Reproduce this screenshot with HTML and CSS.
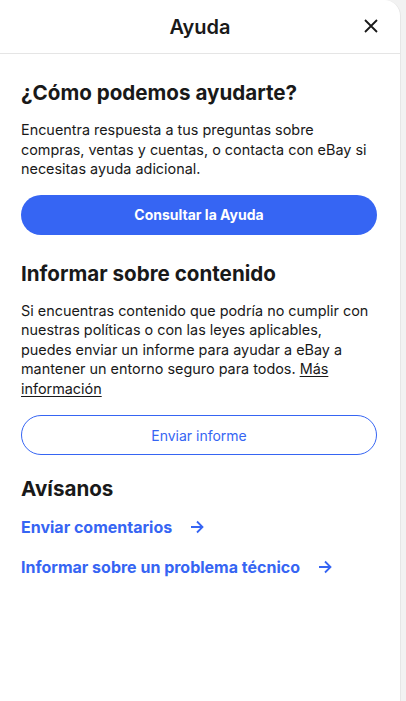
FILE: index.html
```html
<html>
	<head>
		<meta charset="utf-8">
		<link rel="stylesheet" href="styles.css">
	</head>
	<body>
		<div class="panel">
			<div class="head">
				<h1>Ayuda</h1>
				<button class="close" aria-label="Cerrar">
					<svg width="14" height="14" viewBox="0 0 14 14"><path d="M1 1L13 13M13 1L1 13" stroke="#191919" stroke-width="1.8" fill="none"/></svg>
				</button>
			</div>
			<div class="body">
				<h2>¿Cómo podemos ayudarte?</h2>
				<p>Encuentra respuesta a tus preguntas sobre compras, ventas y cuentas, o contacta con eBay si necesitas ayuda adicional.</p>
				<a class="btn primary">Consultar la Ayuda</a>

				<h2>Informar sobre contenido</h2>
				<p class="report">Si encuentras contenido que podría no cumplir con nuestras políticas o con las leyes aplicables, puedes enviar un informe para ayudar a eBay a mantener un entorno seguro para todos. <a class="more">Más información</a></p>
				<a class="btn secondary">Enviar informe</a>

				<h2>Avísanos</h2>
				<a class="link">Enviar comentarios <svg width="14" height="14" viewBox="0 0 14 14"><path d="M1 7H12.5M7 1.5L12.5 7L7 12.5" stroke="#3665f3" stroke-width="1.8" fill="none"/></svg></a>
				<a class="link">Informar sobre un problema técnico <svg width="14" height="14" viewBox="0 0 14 14"><path d="M1 7H12.5M7 1.5L12.5 7L7 12.5" stroke="#3665f3" stroke-width="1.8" fill="none"/></svg></a>
			</div>
		</div>
	</body>
</html>
```

FILE: styles.css
```css
body {
	margin: 0;
	background-color: #f2f2f2;
	font-family: Inter, "Noto Sans", sans-serif;
	color: #191919;
}
.panel {
	width: 401px;
	height: 701px;
	background-color: #fff;
	border-top-right-radius: 16px;
	box-sizing: border-box;
	border-right: 1px solid #e6e6e6;
}
.head {
	height: 53px;
	border-bottom: 1px solid #e5e5e5;
	display: flex;
	align-items: center;
	justify-content: center;
	position: relative;
}
h1 {
	margin: 0;
	font-size: 20px;
	font-weight: 600;
}
.close {
	position: absolute;
	right: 22px;
	top: 19px;
	border: none;
	background: none;
	padding: 0;
	width: 14px;
	height: 14px;
}
.close svg { display: block }
.body {
	padding: 25px 0 0 21px;
}
h2 {
	margin: 0;
	font-size: 20.6px;
	font-weight: 700;
	line-height: 28px;
}
p {
	margin: 13px 0 16px;
	width: 352px;
	font-size: 14.4px;
	line-height: 19.5px;
}
p.report { margin-bottom: 17px }
.more {
	color: inherit;
	text-decoration: underline;
	text-underline-offset: 2px;
}
.btn {
	display: flex;
	align-items: center;
	justify-content: center;
	height: 40px;
	border-radius: 20px;
	font-size: 14px;
	box-sizing: border-box;
	width: 356px;
	margin-bottom: 25px;
}
.primary {
	background-color: #3665f3;
	color: #fff;
	font-weight: 700;
}
.secondary {
	border: 1px solid #3665f3;
	color: #3665f3;
	margin-bottom: 20px;
}
.link {
	display: flex;
	align-items: center;
	gap: 18px;
	color: #3665f3;
	font-weight: 700;
	font-size: 16px;
	margin-top: 14px;
	height: 20px;
}
.link + .link { margin-top: 20px }
```
